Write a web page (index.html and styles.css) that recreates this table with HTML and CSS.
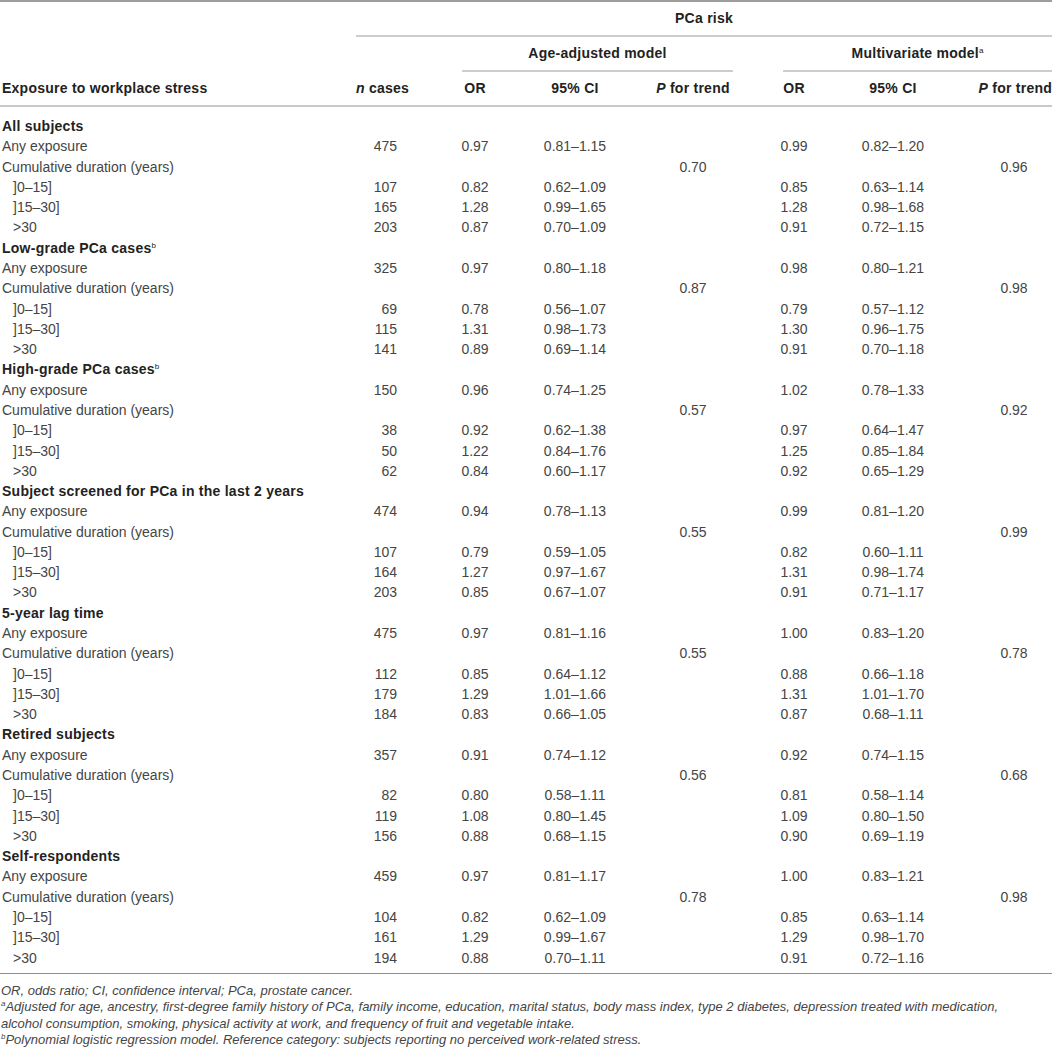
FILE: index.html
```html
<!DOCTYPE html>
<html>
<head>
    <meta charset="utf-8">
    <link rel="stylesheet" href="styles.css">
</head>
<body>
    <table class="results">
        <colgroup>
            <col style="width:356px">
            <col style="width:52px">
            <col style="width:134px">
            <col style="width:66px">
            <col style="width:170px">
            <col style="width:32px">
            <col style="width:166px">
            <col style="width:76px">
        </colgroup>
        <thead>
            <tr>
                <th></th>
                <th colspan="7"><div class="span-label">PCa risk</div></th>
            </tr>
            <tr>
                <th></th>
                <th></th>
                <th colspan="3"><div class="span-label age">Age-adjusted model</div></th>
                <th colspan="3"><div class="span-label multi">Multivariate model<sup>a</sup></div></th>
            </tr>
            <tr class="cols">
                <th class="label">Exposure to workplace stress</th>
                <th><i>n</i> cases</th>
                <th>OR</th>
                <th>95% CI</th>
                <th><i>P</i> for trend</th>
                <th>OR</th>
                <th>95% CI</th>
                <th class="last"><i>P</i> for trend</th>
            </tr>
        </thead>
        <tbody>
            <tr class="group"><td colspan="8">All subjects</td></tr>
            <tr><td>Any exposure</td><td>475</td><td>0.97</td><td>0.81–1.15</td><td></td><td>0.99</td><td>0.82–1.20</td><td></td></tr>
            <tr><td>Cumulative duration (years)</td><td></td><td></td><td></td><td>0.70</td><td></td><td></td><td>0.96</td></tr>
            <tr class="sub"><td>]0–15]</td><td>107</td><td>0.82</td><td>0.62–1.09</td><td></td><td>0.85</td><td>0.63–1.14</td><td></td></tr>
            <tr class="sub"><td>]15–30]</td><td>165</td><td>1.28</td><td>0.99–1.65</td><td></td><td>1.28</td><td>0.98–1.68</td><td></td></tr>
            <tr class="sub"><td>&gt;30</td><td>203</td><td>0.87</td><td>0.70–1.09</td><td></td><td>0.91</td><td>0.72–1.15</td><td></td></tr>

            <tr class="group"><td colspan="8">Low-grade PCa cases<sup>b</sup></td></tr>
            <tr><td>Any exposure</td><td>325</td><td>0.97</td><td>0.80–1.18</td><td></td><td>0.98</td><td>0.80–1.21</td><td></td></tr>
            <tr><td>Cumulative duration (years)</td><td></td><td></td><td></td><td>0.87</td><td></td><td></td><td>0.98</td></tr>
            <tr class="sub"><td>]0–15]</td><td>69</td><td>0.78</td><td>0.56–1.07</td><td></td><td>0.79</td><td>0.57–1.12</td><td></td></tr>
            <tr class="sub"><td>]15–30]</td><td>115</td><td>1.31</td><td>0.98–1.73</td><td></td><td>1.30</td><td>0.96–1.75</td><td></td></tr>
            <tr class="sub"><td>&gt;30</td><td>141</td><td>0.89</td><td>0.69–1.14</td><td></td><td>0.91</td><td>0.70–1.18</td><td></td></tr>

            <tr class="group"><td colspan="8">High-grade PCa cases<sup>b</sup></td></tr>
            <tr><td>Any exposure</td><td>150</td><td>0.96</td><td>0.74–1.25</td><td></td><td>1.02</td><td>0.78–1.33</td><td></td></tr>
            <tr><td>Cumulative duration (years)</td><td></td><td></td><td></td><td>0.57</td><td></td><td></td><td>0.92</td></tr>
            <tr class="sub"><td>]0–15]</td><td>38</td><td>0.92</td><td>0.62–1.38</td><td></td><td>0.97</td><td>0.64–1.47</td><td></td></tr>
            <tr class="sub"><td>]15–30]</td><td>50</td><td>1.22</td><td>0.84–1.76</td><td></td><td>1.25</td><td>0.85–1.84</td><td></td></tr>
            <tr class="sub"><td>&gt;30</td><td>62</td><td>0.84</td><td>0.60–1.17</td><td></td><td>0.92</td><td>0.65–1.29</td><td></td></tr>

            <tr class="group"><td colspan="8">Subject screened for PCa in the last 2 years</td></tr>
            <tr><td>Any exposure</td><td>474</td><td>0.94</td><td>0.78–1.13</td><td></td><td>0.99</td><td>0.81–1.20</td><td></td></tr>
            <tr><td>Cumulative duration (years)</td><td></td><td></td><td></td><td>0.55</td><td></td><td></td><td>0.99</td></tr>
            <tr class="sub"><td>]0–15]</td><td>107</td><td>0.79</td><td>0.59–1.05</td><td></td><td>0.82</td><td>0.60–1.11</td><td></td></tr>
            <tr class="sub"><td>]15–30]</td><td>164</td><td>1.27</td><td>0.97–1.67</td><td></td><td>1.31</td><td>0.98–1.74</td><td></td></tr>
            <tr class="sub"><td>&gt;30</td><td>203</td><td>0.85</td><td>0.67–1.07</td><td></td><td>0.91</td><td>0.71–1.17</td><td></td></tr>

            <tr class="group"><td colspan="8">5-year lag time</td></tr>
            <tr><td>Any exposure</td><td>475</td><td>0.97</td><td>0.81–1.16</td><td></td><td>1.00</td><td>0.83–1.20</td><td></td></tr>
            <tr><td>Cumulative duration (years)</td><td></td><td></td><td></td><td>0.55</td><td></td><td></td><td>0.78</td></tr>
            <tr class="sub"><td>]0–15]</td><td>112</td><td>0.85</td><td>0.64–1.12</td><td></td><td>0.88</td><td>0.66–1.18</td><td></td></tr>
            <tr class="sub"><td>]15–30]</td><td>179</td><td>1.29</td><td>1.01–1.66</td><td></td><td>1.31</td><td>1.01–1.70</td><td></td></tr>
            <tr class="sub"><td>&gt;30</td><td>184</td><td>0.83</td><td>0.66–1.05</td><td></td><td>0.87</td><td>0.68–1.11</td><td></td></tr>

            <tr class="group"><td colspan="8">Retired subjects</td></tr>
            <tr><td>Any exposure</td><td>357</td><td>0.91</td><td>0.74–1.12</td><td></td><td>0.92</td><td>0.74–1.15</td><td></td></tr>
            <tr><td>Cumulative duration (years)</td><td></td><td></td><td></td><td>0.56</td><td></td><td></td><td>0.68</td></tr>
            <tr class="sub"><td>]0–15]</td><td>82</td><td>0.80</td><td>0.58–1.11</td><td></td><td>0.81</td><td>0.58–1.14</td><td></td></tr>
            <tr class="sub"><td>]15–30]</td><td>119</td><td>1.08</td><td>0.80–1.45</td><td></td><td>1.09</td><td>0.80–1.50</td><td></td></tr>
            <tr class="sub"><td>&gt;30</td><td>156</td><td>0.88</td><td>0.68–1.15</td><td></td><td>0.90</td><td>0.69–1.19</td><td></td></tr>

            <tr class="group"><td colspan="8">Self-respondents</td></tr>
            <tr><td>Any exposure</td><td>459</td><td>0.97</td><td>0.81–1.17</td><td></td><td>1.00</td><td>0.83–1.21</td><td></td></tr>
            <tr><td>Cumulative duration (years)</td><td></td><td></td><td></td><td>0.78</td><td></td><td></td><td>0.98</td></tr>
            <tr class="sub"><td>]0–15]</td><td>104</td><td>0.82</td><td>0.62–1.09</td><td></td><td>0.85</td><td>0.63–1.14</td><td></td></tr>
            <tr class="sub"><td>]15–30]</td><td>161</td><td>1.29</td><td>0.99–1.67</td><td></td><td>1.29</td><td>0.98–1.70</td><td></td></tr>
            <tr class="sub"><td>&gt;30</td><td>194</td><td>0.88</td><td>0.70–1.11</td><td></td><td>0.91</td><td>0.72–1.16</td><td></td></tr>
        </tbody>
    </table>

    <div class="notes">
        <p>OR, odds ratio; CI, confidence interval; PCa, prostate cancer.</p>
        <p><sup>a</sup>Adjusted for age, ancestry, first-degree family history of PCa, family income, education, marital status, body mass index, type 2 diabetes, depression treated with medication,<br>alcohol consumption, smoking, physical activity at work, and frequency of fruit and vegetable intake.</p>
        <p><sup>b</sup>Polynomial logistic regression model. Reference category: subjects reporting no perceived work-related stress.</p>
    </div>
</body>
</html>
```

FILE: styles.css
```css
body {
  margin: 0;
  background: #fff;
  color: #454545;
  font-family: "Liberation Sans", Arial, sans-serif;
}

.results {
  width: 1052px;
  table-layout: fixed;
  border-collapse: separate;
  border-spacing: 0;
  border-top: 2px solid #9d9d9d;
  font-size: 14px;
}

.results th {
  padding: 0;
  font-weight: bold;
  color: #222;
  letter-spacing: 0.25px;
  white-space: nowrap;
  text-align: center;
}

.span-label {
  height: 33px;
  line-height: 33px;
  border-bottom: 2px solid #cdcdcd;
}

.span-label.age {
  margin: 0 45px 0 54px;
}

.span-label.multi {
  margin-left: 5px;
}

.cols th {
  height: 33px;
  line-height: 33px;
  border-bottom: 2px solid #c9c9c9;
}

.cols th.label {
  text-align: left;
  padding-left: 2px;
}

.cols th.last {
  text-align: right;
}

.results td {
  padding: 0;
  line-height: 20.28px;
  text-align: center;
  white-space: nowrap;
}

.results td:first-child {
  text-align: left;
  padding-left: 2px;
}

.results tr.sub td:first-child {
  padding-left: 13px;
}

.results td:nth-child(2) {
  text-align: right;
  padding-right: 11px;
}

.results tr.group td {
  font-weight: bold;
  color: #222;
  letter-spacing: 0.25px;
}

.results tbody tr:first-child td {
  padding-top: 9px;
}

.results tbody tr:last-child td {
  padding-bottom: 5px;
  border-bottom: 1px solid #8f8f8f;
}

sup {
  font-size: 8px;
  font-weight: normal;
  line-height: 0;
  vertical-align: 5px;
  letter-spacing: 0;
}

.notes {
  padding: 9px 0 0 1px;
  font-size: 13px;
  font-style: italic;
  line-height: 16.5px;
  white-space: nowrap;
}

.notes p {
  margin: 0;
}
```
